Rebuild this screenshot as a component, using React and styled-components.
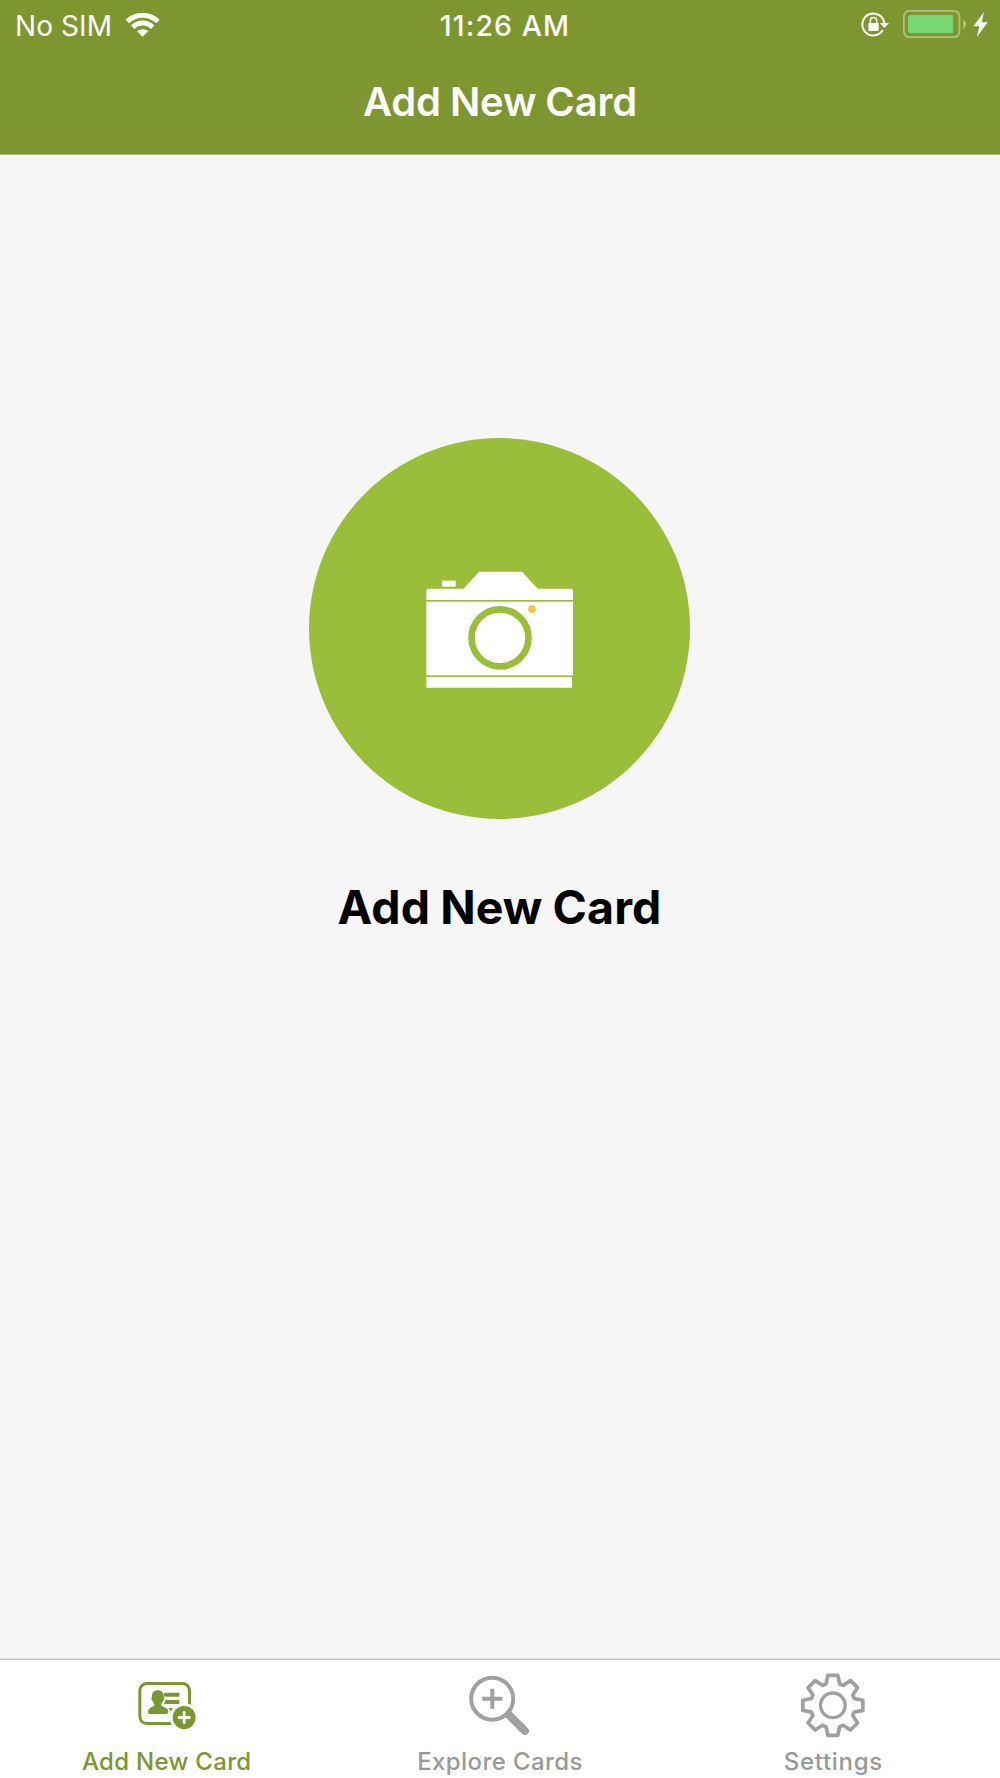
import React from 'react'
import styled, { createGlobalStyle } from 'styled-components'

const GlobalStyle = createGlobalStyle`
  body {
    margin : 0;
    font-family : Inter, "Liberation Sans", sans-serif;
  }
`

const Screen = styled.div`
  display : flex;
  flex-direction : column;
  width : 1000px;
  height : 1778px;
  background-color : #f6f6f6;
`

const Header = styled.header`
  height : 155px;
  box-sizing : border-box;
  border-bottom : 1px solid #b0bf80;
  background-color : #7d962f;
  color : white;
`

const StatusBar = styled.div`
  display : grid;
  grid-template-columns : 1fr auto 1fr;
  align-items : center;
  height : 50px;
  font-size : 28px;
  line-height : 48px;
`

const StatusSide = styled.div`
  display : flex;
  align-items : center;
  gap : 10px;
  padding : 0 10px 0 15px;
  justify-content : ${({ $end }) => ($end ? 'flex-end' : 'flex-start')};
`

const Carrier = styled.span`
  width : 99px;
  padding-top : 2px;
  font-weight : 400;
  letter-spacing : 0.1px;
  white-space : nowrap;
`

const Time = styled.span`
  margin-left : 10px;
  padding-top : 2px;
  font-size : 28.5px;
  font-weight : 500;
  letter-spacing : 1.1px;
`

const Title = styled.h1`
  margin : 0;
  padding-top : 27px;
  text-align : center;
  font-size : 40px;
  line-height : 50px;
  font-weight : 600;
  letter-spacing : -0.2px;
  word-spacing : -0.8px;
`

const Main = styled.main`
  flex : 1;
  display : flex;
  flex-direction : column;
  align-items : center;
`

const CameraButton = styled.button`
  display : flex;
  margin : 283px 1px 0 0;
  padding : 0;
  width : 381px;
  height : 381px;
  border : none;
  border-radius : 50%;
  background-color : #9bbe3a;
`

const Caption = styled.h2`
  margin : 58px 1px 0 0;
  font-size : 46.5px;
  line-height : 60px;
  font-weight : 700;
  letter-spacing : 0.1px;
  word-spacing : -1px;
  color : black;
`

const TabBar = styled.nav`
  display : grid;
  grid-template-columns : repeat(3, 1fr);
  height : 119px;
  box-sizing : border-box;
  border-top : 1px solid #bebebe;
  box-shadow : 0 -1px #dedede;
  background-color : white;
`

const Tab = styled.a`
  display : flex;
  flex-direction : column;
  align-items : center;
  padding-top : 10px;
  color : ${({ $active }) => ($active ? '#7d962f' : '#999999')};
`

const TabLabel = styled.span`
  margin-top : 7px;
  font-size : 24px;
  line-height : 30px;
  font-weight : 500;
  letter-spacing : ${({ $spacing }) => $spacing}px;
  white-space : nowrap;
`

const WifiIcon = () => (
  <svg width="36" height="50" viewBox="372 0 108 150" fill="white">
    <path d="M377 59 A73 73 0 0 1 479 59 L469 70 A58 58 0 0 0 387 70 Z" />
    <path d="M393 76 A50 50 0 0 1 463 76 L453 87 A35 35 0 0 0 403 87 Z" />
    <path d="M411 94 A26 26 0 0 1 445 94 L428 110 Z" />
  </svg>
)

const RotationLockIcon = () => (
  <svg width="30" height="50" viewBox="60 0 90 150" fill="none">
    <path d="M128 91 A33 33 0 1 1 133 71" stroke="white" strokeWidth="6" />
    <path d="M120 69 H147 L133 84 Z" fill="white" />
    <rect x="85" y="69" width="31" height="24" rx="2" fill="white" />
    <path d="M91 70 V62 A9.500 9.500 0 0 1 110 62 V70" stroke="white" strokeWidth="4.500" />
  </svg>
)

const BatteryIcon = () => (
  <svg width="90" height="50" viewBox="180 0 270 150" fill="none">
    <rect x="191.500" y="32.500" width="167" height="79" rx="17" stroke="#b1c07f" strokeWidth="5.500" />
    <path d="M213 45 H339 V99 H213 Q204 99 204 90 V54 Q204 45 213 45 Z" fill="#78d875" />
    <path d="M369 58 Q378 65 378 73 Q378 81 369 88 Z" fill="#b1c07f" />
    <path d="M432 36 L400 79 H418 L411 111 L443 67 H425 Z" fill="white" />
  </svg>
)

const CameraIcon = () => (
  <svg width="381" height="381" viewBox="57 54 1143 1143">
    <g fill="white">
      <rect x="456" y="482" width="41" height="18" />
      <path d="M409 540 V511 Q409 506 414 506 H521 L567 455 H696 L743 506 H844 Q849 506 849 511 V540 Z" />
      <rect x="409" y="545" width="440" height="221" />
      <path d="M409 771 H846 V803 H412 Q409 803 409 800 Z" />
    </g>
    <circle cx="630" cy="653.500" r="85.500" fill="none" stroke="#9bbe3a" strokeWidth="20" />
    <circle cx="726" cy="567.500" r="11.500" fill="#f3c244" />
  </svg>
)

const AddCardIcon = () => (
  <svg width="70" height="70" viewBox="216 60 210 210" fill="currentColor">
    <rect x="239.500" y="100.500" width="149" height="120" rx="21" fill="none" stroke="currentColor" strokeWidth="9" />
    <path d="M293 121 C305 121 312 128 311 140 C314 144 313 150 309 153 C307 158 304 161 303 164 C304 171 324 171 325 183 Q326 192 317 192 H270 Q263 192 264 184 C265 171 283 171 284 164 C282 161 280 157 278 153 C274 150 273 144 276 140 C275 128 282 121 293 121 Z" />
    <rect x="312" y="128" width="46" height="12" rx="2" />
    <path d="M316 150 H358 V162 H312 Z" />
    <path d="M326 174 H340 L333 186 Z" />
    <circle cx="372" cy="202" r="43" fill="white" />
    <circle cx="372.500" cy="202.500" r="34.500" />
    <path d="M372.500 187 V218 M357 202.500 H388" stroke="white" strokeWidth="8.500" strokeLinecap="round" />
  </svg>
)

const ExploreIcon = () => (
  <svg width="70" height="70" viewBox="195 60 210 210" fill="none" stroke="#a0a0a0">
    <circle cx="276.500" cy="146" r="63" strokeWidth="12" />
    <path d="M277 116 V176 M247 146 H307" strokeWidth="12" />
    <path d="M323 191 L368 236" strokeWidth="24" />
    <path d="M362 230 L375 243" strokeWidth="24" strokeLinecap="round" />
  </svg>
)

// one tooth of the gear around (0, 0), repeated eight times
const TOOTH = [[-20.5, -64], [-15, -90], [15, -90], [20.5, -64]]

const gearPoints = Array.from({ length: 8 }, (_, i) => {
  const a = (i * Math.PI) / 4
  return TOOTH.map(([x, y]) => {
    const px = x * Math.cos(a) - y * Math.sin(a)
    const py = x * Math.sin(a) + y * Math.cos(a)
    return `${px.toFixed(1)},${py.toFixed(1)}`
  }).join(' ')
}).join(' ')

const SettingsIcon = () => (
  <svg width="70" height="70" viewBox="84 60 210 210" fill="none" stroke="#a0a0a0" strokeLinejoin="round">
    <g transform="translate(188.500 166)">
      <polygon points={gearPoints} strokeWidth="11" />
      <circle r="37" strokeWidth="10" />
    </g>
  </svg>
)

const tabs = [
  { label: 'Add New Card', Icon: AddCardIcon, active: true, spacing: 0.3 },
  { label: 'Explore Cards', Icon: ExploreIcon, spacing: 0.4 },
  { label: 'Settings', Icon: SettingsIcon, spacing: 0.7 },
]

const App = () => {
  return (
    <>
      <GlobalStyle />
      <Screen>
        <Header>
          <StatusBar>
            <StatusSide>
              <Carrier>No SIM</Carrier>
              <WifiIcon />
            </StatusSide>
            <Time>11:26 AM</Time>
            <StatusSide $end>
              <RotationLockIcon />
              <BatteryIcon />
            </StatusSide>
          </StatusBar>
          <Title>Add New Card</Title>
        </Header>
        <Main>
          <CameraButton aria-label="Take a photo">
            <CameraIcon />
          </CameraButton>
          <Caption>Add New Card</Caption>
        </Main>
        <TabBar>
          {tabs.map(({ label, Icon, active, spacing }) => (
            <Tab key={label} $active={active}>
              <Icon />
              <TabLabel $spacing={spacing}>{label}</TabLabel>
            </Tab>
          ))}
        </TabBar>
      </Screen>
    </>
  )
}

export default App
